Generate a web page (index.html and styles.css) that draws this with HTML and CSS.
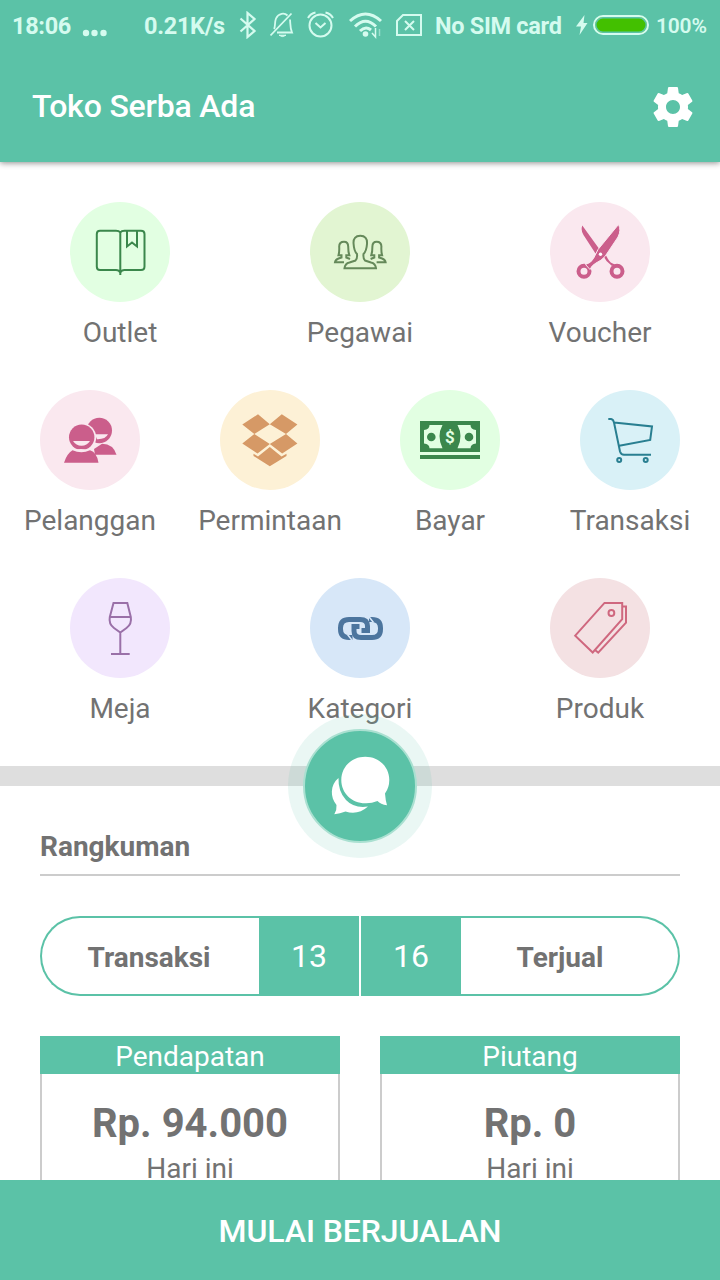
FILE: index.html
```html
<!DOCTYPE html>
<html lang="id">
<head>
<meta charset="utf-8">
<title>Toko Serba Ada</title>
<link rel="stylesheet" href="styles.css">
</head>
<body>
<div class="app">
  <header class="top">
    <div class="status">
      <span>18:06</span>
      <svg width="26" height="8" viewBox="0 0 26 8" class="dots"><g fill="currentColor"><circle cx="4" cy="4" r="3.2"/><circle cx="12.500" cy="4" r="3.2"/><circle cx="21.500" cy="4" r="3.2"/></g></svg>
      <span>0.21K/s</span>
      <svg width="18" height="28" viewBox="0 0 18 28"><path d="M1.500 7.500 15.500 20 8.500 26V2L15.500 8 1.500 20.500" fill="none" stroke="currentColor" stroke-width="2.200"/></svg>
      <svg width="26" height="28" viewBox="0 0 26 28" fill="none" stroke="currentColor" stroke-width="1.800"><path d="M4 18C5.500 16 4.500 11 6 7.500 8.500 2 14.500 1.500 17.500 4.500M20 8.500C20.500 13 20 17 22 21.500H7M.5 24.500 21.500 2.500"/><path d="M9 24.200H16Q12.500 27 9 24.200Z" fill="currentColor" stroke-width="1"/></svg>
      <svg width="27" height="28" viewBox="0 0 27 28" fill="none" stroke="currentColor" stroke-width="2"><circle cx="13.500" cy="14.500" r="11"/><path d="M8.500 12 13.500 16.500 18.500 12M1 7Q3.500 2.500 8.500 1.500M26 7Q23.500 2.500 18.500 1.500"/></svg>
      <svg width="34" height="28" viewBox="0 0 34 28" fill="none" stroke="currentColor" stroke-width="3"><path d="M1 10Q16.500-4 32 10M6 15.500Q16.500 5 27 15.500M11 20Q16.500 14.500 22 19"/><circle cx="16.500" cy="23" r="2.800" fill="currentColor" stroke="none"/><path d="M26.500 17V26L23 22" stroke-width="1.500"/><path d="M30.500 18V25" stroke-width="1.500" opacity=".5"/></svg>
      <svg width="27" height="24" viewBox="0 0 27 24" fill="none" stroke="currentColor" stroke-width="2"><path d="M7 2H25V22H1V8Z"/><path d="M9 8 18 17M18 8 9 17"/></svg>
      <span>No SIM card</span>
      <svg width="13" height="22" viewBox="0 0 13 22"><path d="M8.500 1 0 12.500H5L3.500 21 11.500 9H7.500Z" fill="currentColor"/></svg>
      <div class="battery"></div>
      <span class="percent">100%</span>
    </div>
    <div class="appbar">
      <h1 class="title">Toko Serba Ada</h1>
      <svg width="48" height="48" viewBox="0 0 24 24"><path fill="#fff" d="M19.430 12.980c.04-.32.07-.64.07-.98s-.03-.66-.07-.98l2.110-1.650c.19-.15.24-.42.12-.64l-2-3.460c-.12-.22-.39-.3-.61-.22l-2.490 1c-.52-.4-1.080-.73-1.690-.98l-.38-2.650C14.460 2.180 14.250 2 14 2h-4c-.25 0-.46.18-.49.42l-.38 2.650c-.61.25-1.170.59-1.690.98l-2.490-1c-.23-.09-.49 0-.61.22l-2 3.460c-.13.22-.07.49.12.64l2.110 1.650c-.04.32-.07.65-.07.98s.03.66.07.98l-2.110 1.650c-.19.15-.24.42-.12.64l2 3.460c.12.22.39.3.61.22l2.490-1c.52.4 1.080.73 1.690.98l.38 2.650c.03.24.24.42.49.42h4c.25 0 .46-.18.49-.42l.38-2.650c.61-.25 1.170-.59 1.690-.98l2.490 1c.23.09.49 0 .61-.22l2-3.460c.12-.22.07-.49-.12-.64l-2.110-1.650zM12 15.500c-1.930 0-3.500-1.570-3.500-3.500s1.570-3.500 3.500-3.500 3.500 1.570 3.500 3.500-1.570 3.500-3.500 3.500z"/></svg>
    </div>
  </header>

  <main class="content">
    <nav class="menu">
      <div class="row">
        <div class="item">
          <svg class="icon mint" viewBox="0 0 100 100" fill="none" stroke="#3b874c" stroke-width="2"><path d="M50.300 30.500Q49 28.700 46 28.700H30Q26.800 28.700 26.800 32V64.500Q26.800 68 30 68H46Q49 68 50.300 70.500Q51.500 68 54.500 68H71Q74.500 68 74.500 64.500V32Q74.500 28.700 71 28.700H54.500Q51.500 28.700 50.300 30.500V73M57 29V44.500L62 40.500 67 44.500V29"/></svg>
          <span>Outlet</span>
        </div>
        <div class="item">
          <svg class="icon lime" viewBox="0 0 100 100" fill="none" stroke="#65895a" stroke-width="2"><path d="M34.500 66.200H66Q65.500 61.500 61 60.500L55 58.500Q53 57 53.500 52Q56.500 49 57 42C57.500 36.500 55 33.800 50.300 33.800S43 36.500 43.600 42Q44 49 47 52Q47.500 57 45.500 58.500L39.500 60.500Q35 61.500 34.500 66.200Z"/><path id="person" d="M34 60.200H25Q25.500 57.500 28.500 56.500L31.500 55.500V53.200H28.500Q29.500 50 29.200 44.500C29.200 41 31 39.700 34 39.700S38.200 41.500 38.200 44.500Q38.200 50 39.300 53.200H36.300V55.500L40 57"/><use href="#person" transform="matrix(-1 0 0 1 100.600 0)"/></svg>
          <span>Pegawai</span>
        </div>
        <div class="item">
          <svg class="icon pink" viewBox="0 0 100 100"><g fill="none" stroke="#cb5e8b" stroke-width="4"><circle cx="34" cy="69.300" r="5.500"/><circle cx="67" cy="69.300" r="5.500"/></g><path fill="#cb5e8b" d="M32.300 23.500Q30.500 28 33.500 33L45.500 51.500 50 48ZM53 53.500 56.500 59 62 64 65 62.500Q60 61 58 57L55 51.500Z"/><path fill="#cb5e8b" stroke="#fae8ef" stroke-width="1" d="M68.500 22.500Q71.500 28 68 35L55 54.500Q51.500 58.500 46 61Q41.500 63.500 40 67.500L35.500 62.500Q41 61 43.500 56.500L48 47.500Z"/><circle cx="50.500" cy="52.300" r="1.700" fill="#fff"/></svg>
          <span>Voucher</span>
        </div>
      </div>
      <div class="row">
        <div class="item">
          <svg class="icon pink" viewBox="0 0 100 100" fill="#cb5e8b"><circle cx="59.300" cy="40.500" r="12.700"/><path d="M54 59 62 53.700Q73.500 54 76.500 64.800H55Z"/><path d="M55 44.300H68Q65.500 49.500 57 49.200Z" fill="#fae8ef"/><circle cx="41.700" cy="47.500" r="14.500" fill="#fae8ef"/><circle cx="41.700" cy="47.300" r="12.700"/><path d="M33 51H50Q47 55.700 41.500 55.700T33 51Z" fill="#fae8ef"/><path d="M23 73Q27 59 41 59T59.500 73Z" fill="#fae8ef"/><path d="M24 72.700Q27 63.500 32.500 60.300Q41.500 64 50 60.300Q57 62.500 58.500 72.700Z"/></svg>
          <span>Pelanggan</span>
        </div>
        <div class="item">
          <svg class="icon cream" viewBox="0 0 100 100" fill="#d69966"><path d="M38 24.300 49.800 34.300 34.300 44 22.300 34.500ZM61.800 24.300 77.400 34.500 66 44 49.800 34.300ZM34.300 44 49.800 54 37.500 63.500 22.300 53.500ZM66 44 77.400 53.500 62.200 63.500 49.800 54ZM49.800 57 61.500 66.500 66.500 63.700V66L49.800 76.300 33.500 66V63.700L38 66.500Z"/></svg>
          <span>Permintaan</span>
        </div>
        <div class="item">
          <svg class="icon mint" viewBox="0 0 100 100"><path fill="#3b874c" d="M20 31H80V62H20ZM20 65H80V69H20Z"/><path fill="#e2ffe2" d="M29.500 35H42.500Q36.500 46 42.500 58.300H29.500Q29.500 54 24 53.500V40Q29.500 39.500 29.500 35ZM70.500 35H57.500Q63.500 46 57.500 58.300H70.500Q70.500 54 76 53.500V40Q70.500 39.500 70.500 35Z"/><circle cx="31.300" cy="47" r="4.300" fill="#3b874c"/><circle cx="69" cy="47" r="4.300" fill="#3b874c"/><text x="50" y="53" text-anchor="middle" class="dollar">$</text></svg>
          <span>Bayar</span>
        </div>
        <div class="item">
          <svg class="icon sky" viewBox="0 0 100 100" fill="none" stroke="#297f91" stroke-width="2"><path d="M28.300 28.900H31Q33.300 29.300 34 32.500L40 61.500Q41 64.700 44 64.700H71M34 32.500 72 36.500 70.200 50 39.300 55.700"/><circle cx="39.200" cy="70" r="2"/><circle cx="65.700" cy="70" r="2"/></svg>
          <span>Transaksi</span>
        </div>
      </div>
      <div class="row">
        <div class="item">
          <svg class="icon lilac" viewBox="0 0 100 100" fill="none" stroke="#9a70a8" stroke-width="2"><path d="M43.500 24.900H57.300L60.800 39Q62 46 56.500 50L50.300 54.500 44 50Q38.500 46 39.800 39ZM39.500 39H61M50.300 54.500V76M41 76H59.700"/></svg>
          <span>Meja</span>
        </div>
        <div class="item">
          <svg class="icon blue" viewBox="0 0 100 100" fill="none" stroke="#4c759e" stroke-width="5"><path d="M42.500 59.500H39Q30.500 59.500 30.500 51V50Q30.500 41.500 39 41.500H50Q57.500 41.500 57.500 48V52.500H51.500"/><path d="M49.500 48.500H44V53Q44 59.500 51 59.500H62Q70.500 59.500 70.500 51V50Q70.500 41.500 62 41.500H59"/><path d="M37.500 56.500 43 63.500M58 37.500 63.500 44.500" stroke="#d7e7f8" stroke-width="1.500"/></svg>
          <span>Kategori</span>
        </div>
        <div class="item">
          <svg class="icon rose" viewBox="0 0 100 100" fill="none" stroke="#cf687f" stroke-width="2"><path d="M54.500 24.900H72.200V41.200L42.700 74.500 25.200 57.700ZM72.200 28.600H76V44.700L48.200 74.600 45.300 72.300"/><circle cx="61.400" cy="35" r="2.900"/></svg>
          <span>Produk</span>
        </div>
      </div>
    </nav>

    <div class="divider">
      <svg class="chat" viewBox="0 0 144 144"><circle cx="72" cy="72" r="72" fill="#5bc2a7" fill-opacity=".13"/><circle cx="72" cy="72" r="56" fill="#5bc2a7" stroke="#aae0d1" stroke-width="2"/><path fill="#fff" d="M50.500 64C42 71 42 83 48.500 91Q49 96 46.300 100.300Q52 99.500 57.500 97.500Q70 101.500 80 92.500Q66 94.500 58 86T50.500 64Z"/><path fill="#fff" d="M77.300 42.700C91 42.700 101.300 53 101.300 66Q101.300 73.500 97 79.500Q97.500 86.500 99 91.300Q92.500 90.500 89.500 87Q83.500 89.500 77.300 89.300C63.500 89.300 53.300 79 53.300 66S63.500 42.700 77.300 42.700Z"/></svg>
    </div>

    <section class="summary">
      <h2 class="heading">Rangkuman</h2>
      <div class="pill">
        <span class="name">Transaksi</span>
        <span class="count">13</span>
        <span class="count">16</span>
        <span class="name">Terjual</span>
      </div>
      <div class="cards">
        <div class="card">
          <div class="card-head">Pendapatan</div>
          <div class="card-body"><strong class="amount">Rp. 94.000</strong><span>Hari ini</span></div>
        </div>
        <div class="card">
          <div class="card-head">Piutang</div>
          <div class="card-body"><strong class="amount">Rp. 0</strong><span>Hari ini</span></div>
        </div>
      </div>
    </section>
  </main>

  <div class="start">MULAI BERJUALAN</div>
</div>
</body>
</html>
```

FILE: styles.css
```css
* { box-sizing: border-box; }
body {
  margin: 0;
  background: #fff;
  color: #727272;
  font-family: Roboto, "Liberation Sans", sans-serif;
  font-size: 28px;
  line-height: 33px;
}
svg { display: block; }
.app {
  display: flex;
  flex-direction: column;
  width: 720px;
  height: 1280px;
  overflow: hidden;
}
.top {
  flex: none;
  height: 162px;
  background: #5bc2a7;
  box-shadow: 0 1px 6px rgba(0, 0, 0, .45);
  position: relative;
  z-index: 1;
}
.status {
  display: grid;
  grid-template-columns: 70px 62px 95px 31px 37px 42px 47px 39px 141px 17px 63px auto;
  align-items: center;
  justify-content: start;
  height: 50px;
  padding-left: 12px;
  color: #d5fbef;
  font-size: 23.5px;
  font-weight: 700;
  letter-spacing: -.3px;
  line-height: 50px;
  white-space: nowrap;
}
.status > span { height: 50px; padding-top: 1px; }
.status .percent { font-size: 21px; font-weight: 600; letter-spacing: -.2px; }
.dots { margin-top: 15px; }
.battery {
  width: 56px;
  height: 20px;
  border: 2px solid #d5fbef;
  border-radius: 10px;
  background: #43c000;
  box-shadow: inset 0 0 0 1.500px #5bc2a7;
}
.appbar {
  display: flex;
  align-items: center;
  justify-content: space-between;
  height: 112px;
  padding: 1px 23px 0 32px;
}
.title { margin: 0; color: #fff; font-size: 32px; font-weight: 500; letter-spacing: -.18px; }
.content { flex: 1; min-height: 0; overflow: hidden; }
.menu {
  display: flex;
  flex-direction: column;
  gap: 41px;
  height: 604px;
  padding-top: 40px;
}
.row { display: flex; }
.item {
  flex: 1;
  display: flex;
  flex-direction: column;
  align-items: center;
  gap: 14px;
}
.icon { width: 100px; height: 100px; border-radius: 50%; }
.mint { background: #e2ffe2; }
.lime { background: #e2f5d2; }
.pink { background: #fae8ef; }
.cream { background: #fdf1d6; }
.sky { background: #d9f1f7; }
.lilac { background: #f2e7fd; }
.blue { background: #d7e7f8; }
.rose { background: #f4e1e3; }
.dollar { fill: #e2ffe2; font-size: 17px; font-weight: 700; }
.divider { position: relative; height: 20px; background: #dedede; }
.chat { position: absolute; left: 288px; top: -52px; width: 144px; height: 144px; }
.summary { padding: 44px 40px 0; }
.heading {
  height: 46px;
  margin: 0 0 40px;
  border-bottom: 2px solid #ccc;
  font-size: 28px;
  font-weight: 700;
}
.pill {
  display: grid;
  grid-template-columns: 1fr 100px 100px 1fr;
  grid-template-rows: 80px;
  column-gap: 2px;
  height: 80px;
  line-height: 81px;
  text-align: center;
}
.name { border: 2px solid #5bc2a7; font-weight: 700; line-height: 79px; }
.name:first-child { margin-right: -2px; padding-right: 3px; border-right: 0; border-radius: 40px 0 0 40px; }
.name:last-child { margin-left: -2px; padding-right: 19px; border-left: 0; border-radius: 0 40px 40px 0; }
.count { height: 80px; background: #5bc2a7; color: #fff; font-size: 32px; }
.cards { display: flex; gap: 40px; margin-top: 40px; }
.card { flex: 1; text-align: center; }
.card-head { height: 38px; padding-top: 4px; background: #5bc2a7; color: #fff; }
.card-body {
  display: flex;
  flex-direction: column;
  height: 150px;
  padding-top: 26px;
  border: 2px solid #ccc;
  border-top: 0;
}
.amount { height: 52px; font-size: 40px; line-height: 47px; }
.start {
  flex: none;
  height: 100px;
  background: #5bc2a7;
  color: #fff;
  font-size: 32px;
  font-weight: 500;
  letter-spacing: -.1px;
  line-height: 102px;
  text-align: center;
}
```
